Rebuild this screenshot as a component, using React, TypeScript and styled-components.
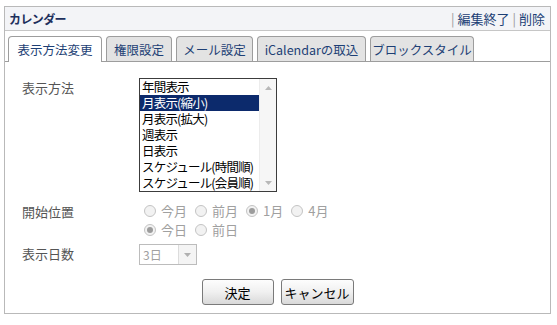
import React from 'react'
import styled, { createGlobalStyle } from 'styled-components'

const tabs = [
  { label: '表示方法変更', width: 94, active: true },
  { label: '権限設定', width: 66 },
  { label: 'メール設定', width: 77 },
  { label: 'iCalendarの取込', width: 109 },
  { label: 'ブロックスタイル', width: 104 }
]

const displayOptions = [
  '年間表示',
  '月表示(縮小)',
  '月表示(拡大)',
  '週表示',
  '日表示',
  'スケジュール(時間順)',
  'スケジュール(会員順)'
]

const startRows = [
  [
    { label: '今月', checked: false },
    { label: '前月', checked: false },
    { label: '1月', checked: true },
    { label: '4月', checked: false }
  ],
  [
    { label: '今日', checked: true },
    { label: '前日', checked: false }
  ]
]

export default function App() {
  return (
    <>
      <GlobalStyle />
      <Frame>
        <Header>
          <Title>カレンダー</Title>
          <HeaderLinks>
            <Sep>|</Sep>
            <HeaderLink>編集終了</HeaderLink>
            <Sep>|</Sep>
            <HeaderLink>削除</HeaderLink>
          </HeaderLinks>
        </Header>

        <TabBar>
          {tabs.map(tab => (
            <Tab key={tab.label} $active={!!tab.active} $w={tab.width}>
              {tab.label}
            </Tab>
          ))}
        </TabBar>

        <Body>
          <FormGrid>
            <Label $top={2}>表示方法</Label>
            <ListBox>
              <Options>
                {displayOptions.map((opt, i) => (
                  <Option key={opt} $selected={i === 1}>
                    {opt}
                  </Option>
                ))}
              </Options>
              <ScrollBar>
                <svg width='7' height='4' viewBox='0 0 7 4'>
                  <path d='M0 4 L3.5 0 L7 4 Z' fill='#b8b8b8' />
                </svg>
                <svg width='7' height='4' viewBox='0 0 7 4'>
                  <path d='M0 0 L3.5 4 L7 0 Z' fill='#b8b8b8' />
                </svg>
              </ScrollBar>
            </ListBox>

            <Label $top={12}>開始位置</Label>
            <RadioGroup>
              {startRows.map((row, r) => (
                <RadioRow key={r}>
                  {row.map(item => (
                    <RadioItem key={item.label}>
                      <RadioMark $checked={item.checked} />
                      {item.label}
                    </RadioItem>
                  ))}
                </RadioRow>
              ))}
            </RadioGroup>

            <Label $top={9}>表示日数</Label>
            <Select>
              <SelectValue>3日</SelectValue>
              <SelectButton>
                <svg width='7' height='4' viewBox='0 0 7 4'>
                  <path d='M0 0 L3.5 4 L7 0 Z' fill='#b0b0b0' />
                </svg>
              </SelectButton>
            </Select>
          </FormGrid>

          <Buttons>
            <Button $w={72}>決定</Button>
            <Button $w={73}>キャンセル</Button>
          </Buttons>
        </Body>
      </Frame>
    </>
  )
}

const GlobalStyle = createGlobalStyle`
  body {
    margin: 0;
    background: #fff;
    font-family: 'Noto Sans CJK JP', 'Noto Sans', sans-serif;
  }
`

const Frame = styled.div`
  box-sizing: border-box;
  margin: 6px 0 0 4px;
  width: 547px;
  height: 308px;
  border: 1px solid #b9b9b9;
  display: flex;
  flex-direction: column;
`

const Header = styled.div`
  height: 23px;
  background: #f3f4f7;
  border-bottom: 1px solid #c6c6c6;
  display: flex;
  align-items: center;
  justify-content: space-between;
  padding: 0 5px 0 4px;
`

const Title = styled.div`
  font-size: 12px;
  font-weight: bold;
  color: #1d2f5c;
  letter-spacing: -0.6px;
`

const HeaderLinks = styled.div`
  display: flex;
  align-items: center;
  font-size: 13px;
  color: #1d3f75;
`

const Sep = styled.span`
  color: #9a9a9a;
  margin: 0 3px 0 0;
`

const HeaderLink = styled.span`
  margin-right: 3px;
  &:last-child {
    margin-right: 0;
  }
`

const TabBar = styled.div`
  display: flex;
  align-items: flex-end;
  gap: 4px;
  padding: 5px 0 0 3px;
  height: 25px;
  border-bottom: 1px solid #9d9d9d;
`

const Tab = styled.div<{ $active: boolean; $w: number }>`
  box-sizing: border-box;
  width: ${({ $w }) => $w}px;
  height: ${({ $active }) => ($active ? 26 : 25)}px;
  margin-bottom: ${({ $active }) => ($active ? -1 : 0)}px;
  border: 1px solid #9d9d9d;
  border-bottom: none;
  border-radius: 4px 4px 0 0;
  background: ${({ $active }) => ($active ? '#fff' : '#e3e3e3')};
  color: #1d3f75;
  font-size: 12.5px;
  display: flex;
  align-items: center;
  justify-content: center;
  padding-bottom: ${({ $active }) => ($active ? 1 : 0)}px;
  white-space: nowrap;
`

const Body = styled.div`
  padding: 16px 0 0 17px;
  display: flex;
  flex-direction: column;
`

const FormGrid = styled.div`
  display: grid;
  grid-template-columns: 117px auto;
  align-items: start;
  justify-items: start;
`

const Label = styled.div<{ $top: number }>`
  margin-top: ${({ $top }) => $top}px;
  font-size: 13px;
  line-height: 16px;
  color: #555;
`

const ListBox = styled.div`
  box-sizing: border-box;
  width: 138px;
  height: 114px;
  border: 1px solid #3c3c3c;
  display: flex;
`

const Options = styled.div`
  flex: 1;
  display: flex;
  flex-direction: column;
`

const Option = styled.div<{ $selected: boolean }>`
  height: 16px;
  line-height: 16px;
  font-size: 12.5px;
  padding-left: 2px;
  letter-spacing: -0.8px;
  white-space: nowrap;
  color: ${({ $selected }) => ($selected ? '#fff' : '#000')};
  background: ${({ $selected }) => ($selected ? '#0c2a6c' : 'transparent')};
`

const ScrollBar = styled.div`
  width: 17px;
  background: #f6f6f6;
  border-left: 1px solid #ececec;
  display: flex;
  flex-direction: column;
  align-items: center;
  justify-content: space-between;
  padding: 7px 0 6px;
  box-sizing: border-box;
`

const RadioGroup = styled.div`
  margin-top: 12px;
  display: flex;
  flex-direction: column;
  gap: 5px;
`

const RadioRow = styled.div`
  display: flex;
  gap: 8px;
  padding-left: 5px;
`

const RadioItem = styled.label`
  display: flex;
  align-items: center;
  gap: 5px;
  font-size: 13px;
  line-height: 14px;
  color: #a0a0a0;
`

const RadioMark = styled.span<{ $checked: boolean }>`
  box-sizing: border-box;
  width: 12px;
  height: 12px;
  border-radius: 50%;
  border: 1px solid #c4c4c4;
  background: #f2f2f2;
  display: flex;
  align-items: center;
  justify-content: center;

  &::after {
    content: '';
    width: 6px;
    height: 6px;
    border-radius: 50%;
    background: ${({ $checked }) => ($checked ? '#9c9c9c' : 'transparent')};
  }
`

const Select = styled.div`
  box-sizing: border-box;
  margin-top: 7px;
  width: 58px;
  height: 21px;
  border: 1px solid #bcbcbc;
  display: flex;
  background: #fff;
`

const SelectValue = styled.div`
  flex: 1;
  font-size: 12px;
  line-height: 19px;
  padding-left: 3px;
  color: #a0a0a0;
`

const SelectButton = styled.div`
  width: 17px;
  border-left: 1px solid #dcdcdc;
  background: #f4f4f4;
  display: flex;
  align-items: center;
  justify-content: center;
`

const Buttons = styled.div`
  display: flex;
  justify-content: center;
  gap: 7px;
  margin: 14px 0 0 -17px;
`

const Button = styled.button<{ $w: number }>`
  box-sizing: border-box;
  width: ${({ $w }) => $w}px;
  height: 26px;
  border: 1px solid #7a7a7a;
  border-radius: 3px;
  background: linear-gradient(#fdfdfd, #f0f0f0 50%, #d9d9d9);
  font-family: 'Noto Sans CJK JP', sans-serif;
  font-size: 13px;
  color: #000;
  padding: 0;
`
